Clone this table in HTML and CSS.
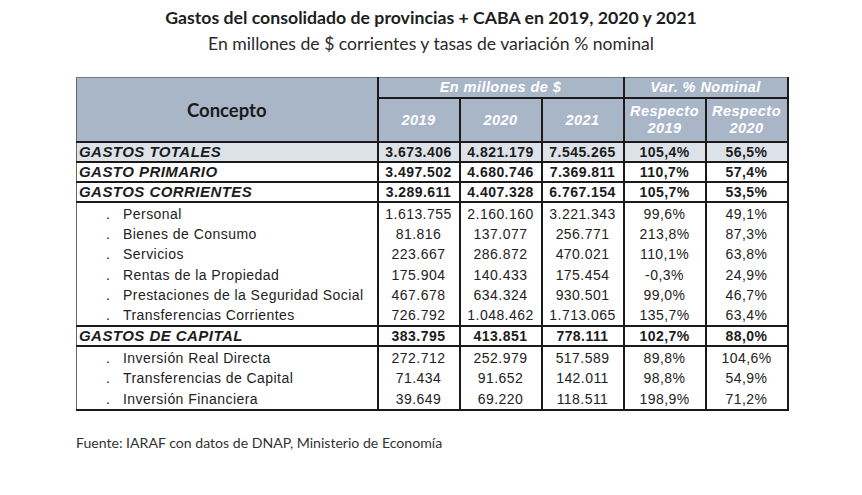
FILE: index.html
```html
<!DOCTYPE html>
<html lang="es">
<head>
<meta charset="utf-8">
<link rel="stylesheet" href="styles.css">
</head>
<body>
<div class="page">
  <div class="titles">
    <div class="title">Gastos del consolidado de provincias + CABA en 2019, 2020 y 2021</div>
    <div class="subtitle">En millones de $ corrientes y tasas de variación % nominal</div>
  </div>
  <table class="data">
    <colgroup>
      <col class="c-concept"><col class="c-num"><col class="c-num"><col class="c-num"><col class="c-num"><col class="c-num">
    </colgroup>
    <thead>
      <tr class="h1">
        <th rowspan="2" class="concept-h">Concepto</th>
        <th colspan="3" class="grp">En millones de $</th>
        <th colspan="2" class="grp">Var. % Nominal</th>
      </tr>
      <tr class="h2">
        <th>2019</th><th>2020</th><th>2021</th>
        <th>Respecto<br>2019</th><th>Respecto<br>2020</th>
      </tr>
    </thead>
    <tbody>
      <tr class="main shaded">
        <td class="label">GASTOS TOTALES</td><td>3.673.406</td><td>4.821.179</td><td>7.545.265</td><td>105,4%</td><td>56,5%</td>
      </tr>
      <tr class="main">
        <td class="label">GASTO PRIMARIO</td><td>3.497.502</td><td>4.680.746</td><td>7.369.811</td><td>110,7%</td><td>57,4%</td>
      </tr>
      <tr class="main">
        <td class="label">GASTOS CORRIENTES</td><td>3.289.611</td><td>4.407.328</td><td>6.767.154</td><td>105,7%</td><td>53,5%</td>
      </tr>
      <tr class="sub first">
        <td class="label"><span class="dot">.</span>Personal</td><td>1.613.755</td><td>2.160.160</td><td>3.221.343</td><td>99,6%</td><td>49,1%</td>
      </tr>
      <tr class="sub">
        <td class="label"><span class="dot">.</span>Bienes de Consumo</td><td>81.816</td><td>137.077</td><td>256.771</td><td>213,8%</td><td>87,3%</td>
      </tr>
      <tr class="sub">
        <td class="label"><span class="dot">.</span>Servicios</td><td>223.667</td><td>286.872</td><td>470.021</td><td>110,1%</td><td>63,8%</td>
      </tr>
      <tr class="sub">
        <td class="label"><span class="dot">.</span>Rentas de la Propiedad</td><td>175.904</td><td>140.433</td><td>175.454</td><td>-0,3%</td><td>24,9%</td>
      </tr>
      <tr class="sub">
        <td class="label"><span class="dot">.</span>Prestaciones de la Seguridad Social</td><td>467.678</td><td>634.324</td><td>930.501</td><td>99,0%</td><td>46,7%</td>
      </tr>
      <tr class="sub">
        <td class="label"><span class="dot">.</span>Transferencias Corrientes</td><td>726.792</td><td>1.048.462</td><td>1.713.065</td><td>135,7%</td><td>63,4%</td>
      </tr>
      <tr class="main">
        <td class="label">GASTOS DE CAPITAL</td><td>383.795</td><td>413.851</td><td>778.111</td><td>102,7%</td><td>88,0%</td>
      </tr>
      <tr class="sub first">
        <td class="label"><span class="dot">.</span>Inversión Real Directa</td><td>272.712</td><td>252.979</td><td>517.589</td><td>89,8%</td><td>104,6%</td>
      </tr>
      <tr class="sub">
        <td class="label"><span class="dot">.</span>Transferencias de Capital</td><td>71.434</td><td>91.652</td><td>142.011</td><td>98,8%</td><td>54,9%</td>
      </tr>
      <tr class="sub">
        <td class="label"><span class="dot">.</span>Inversión Financiera</td><td>39.649</td><td>69.220</td><td>118.511</td><td>198,9%</td><td>71,2%</td>
      </tr>
    </tbody>
  </table>
  <div class="source">Fuente: IARAF con datos de DNAP, Ministerio de Economía</div>
</div>
</body>
</html>
```
FILE: styles.css
```css
html, body {
  margin: 0;
  padding: 0;
  background: #ffffff;
}
.page {
  width: 862px;
  height: 495px;
  box-sizing: border-box;
  padding-top: 7px;
}
.titles {
  text-align: center;
  font-family: Lato, "Open Sans", sans-serif;
  color: #1e1e1e;
}
.title {
  font-size: 17.7px;
  font-weight: 700;
  line-height: 21px;
}
.subtitle {
  font-size: 17.6px;
  line-height: 21px;
  margin-top: 5px;
  color: #2a2a2a;
}
.data {
  margin: 23px 0 0 76px;
  width: 710px;
  table-layout: fixed;
  border-collapse: collapse;
  font-family: "Liberation Sans", Arial, sans-serif;
  font-size: 14px;
  letter-spacing: 0.45px;
  color: #1c1c1c;
  border: 2px solid #1a1a1a;
  border-left: 1px solid #666;
  border-top: 1px solid #777;
}
.c-concept { width: 301px; }
.c-num { width: 82px; }
.data th {
  background: #a9b6c8;
  color: #ffffff;
  font-style: italic;
  font-weight: 700;
  padding: 0;
  border: 2px solid #1a1a1a;
  text-align: center;
}
.data tr.h1 th:first-child { border-left: 1px solid #666; }
.data tr.h1 th { border-top: 1px solid #777; }
.data tr.h1 th.grp {
  height: 19px;
  line-height: 17px;
  font-size: 14.5px;
}
.data tr.h2 th {
  height: 42px;
  line-height: 17px;
  font-size: 14.5px;
}
.data th.concept-h {
  color: #1a1a1a;
  font-style: normal;
  font-family: Lato, "Open Sans", sans-serif;
  font-size: 18.5px;
  letter-spacing: 0;
  padding-top: 0;
}
.data td {
  padding: 0;
  text-align: center;
  border-left: 2px solid #1a1a1a;
  border-right: 2px solid #1a1a1a;
  white-space: nowrap;
}
.data td.label {
  text-align: left;
  border-left: 1px solid #666;
}
.data tr.main td {
  height: 18px;
  line-height: 18px;
  font-weight: 700;
  border-top: 2px solid #1a1a1a;
  border-bottom: 2px solid #1a1a1a;
}
.data tr.main td.label {
  font-style: italic;
  padding-left: 2px;
  font-size: 15px;
}
.data tr.shaded td { background: #dde2e8; }
.data tr.sub td {
  height: 20.2px;
  line-height: 20px;
  color: #222;
}
.data tr.sub td.label { padding-left: 29px; }
.data tr.sub.first td { padding-top: 1px; }
.dot {
  display: inline-block;
  width: 17px;
}
.source {
  margin: 23px 0 0 76px;
  font-family: Lato, "Open Sans", sans-serif;
  font-size: 14.1px;
  line-height: 17px;
  color: #333;
}
```
